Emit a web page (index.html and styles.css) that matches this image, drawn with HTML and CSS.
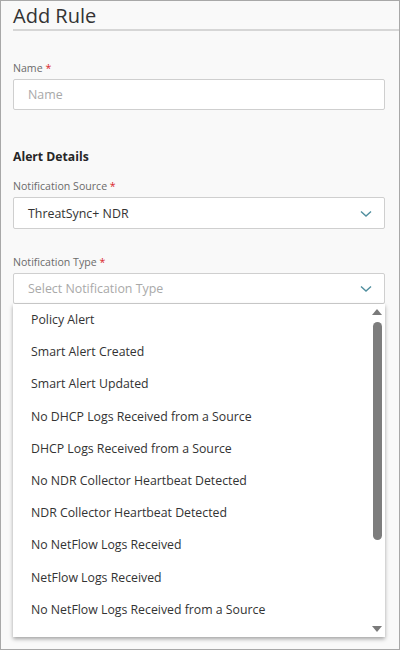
FILE: index.html
```html
<!DOCTYPE html>
<html lang="en">
<head>
<meta charset="utf-8">
<title>Add Rule</title>
<link rel="stylesheet" href="styles.css">
</head>
<body>
<div class="frame">
  <h1 class="title">Add Rule</h1>

  <div class="field field-name">
    <label class="label">Name <span class="req">*</span></label>
    <div class="input"><span class="placeholder">Name</span></div>
  </div>

  <h2 class="section">Alert Details</h2>

  <div class="field field-source">
    <label class="label">Notification Source <span class="req">*</span></label>
    <div class="input select">
      <span class="value">ThreatSync+ NDR</span>
      <svg class="chev" width="12" height="8" viewBox="0 0 12 8"><polyline points="1,1.5 6,6 11,1.5" fill="none" stroke="#4f8e9e" stroke-width="1.4"/></svg>
    </div>
  </div>

  <div class="field field-type">
    <label class="label">Notification Type <span class="req">*</span></label>
    <div class="input select">
      <span class="placeholder">Select Notification Type</span>
      <svg class="chev" width="12" height="8" viewBox="0 0 12 8"><polyline points="1,1.5 6,6 11,1.5" fill="none" stroke="#4f8e9e" stroke-width="1.4"/></svg>
    </div>
    <div class="dropdown">
      <ul class="options">
        <li>Policy Alert</li>
        <li>Smart Alert Created</li>
        <li>Smart Alert Updated</li>
        <li>No DHCP Logs Received from a Source</li>
        <li>DHCP Logs Received from a Source</li>
        <li>No NDR Collector Heartbeat Detected</li>
        <li>NDR Collector Heartbeat Detected</li>
        <li>No NetFlow Logs Received</li>
        <li>NetFlow Logs Received</li>
        <li>No NetFlow Logs Received from a Source</li>
      </ul>
      <div class="scrollbar">
        <span class="arrow up"></span>
        <span class="thumb"></span>
        <span class="track"></span>
        <span class="arrow down"></span>
      </div>
    </div>
  </div>
</div>
</body>
</html>
```

FILE: styles.css
```css
* { box-sizing: border-box; }
html, body {
  margin: 0;
  padding: 0;
}
body {
  width: 400px;
  height: 650px;
  background: #f9f9f9;
  font-family: "Open Sans", "Liberation Sans", sans-serif;
  color: #333;
}
.frame {
  width: 400px;
  height: 650px;
  border: 1px solid #a8a8a8;
  padding: 0 14px 0 12px;
  overflow: hidden;
}
.title {
  margin: 3px -14px 0 0;
  padding: 0 0 1px 0;
  font-size: 20px;
  line-height: 24px;
  font-weight: 400;
  color: #333;
  border-bottom: 2px solid #d6d6d6;
}
.field { display: flex; flex-direction: column; }
.field-name { margin-top: 29px; }
.label {
  font-size: 10.6px;
  line-height: 16px;
  color: #6b6b6b;
  margin-bottom: 3px;
}
.req { color: #d9262b; }
.input {
  height: 31px;
  background: #fff;
  border: 1px solid #cfcfcf;
  border-radius: 2px;
  padding: 0 12px 0 14px;
  display: flex;
  align-items: center;
  font-size: 12.4px;
}
.placeholder { color: #a9a9a9; }
.value { color: #333; }
.select { justify-content: space-between; }
.chev { display: block; margin-top: 1px; }
.section {
  margin: 38px 0 0 0;
  font-size: 12.2px;
  line-height: 18px;
  font-weight: 700;
  color: #262626;
}
.field-source { margin-top: 12px; }
.field-source .input { height: 32px; }
.field-type { margin-top: 25px; }
.dropdown {
  margin-top: 0;
  height: 333px;
  background: #fff;
  box-shadow: 0 2px 4px rgba(0,0,0,0.35);
  display: flex;
}
.options {
  list-style: none;
  margin: 0;
  padding: 0;
  flex: 1;
}
.options li {
  height: 32.2px;
  line-height: 32px;
  padding-left: 18px;
  font-size: 12.3px;
  color: #333;
  white-space: nowrap;
}
.scrollbar {
  width: 14px;
  display: flex;
  flex-direction: column;
  align-items: center;
  padding: 5px 2px 5px 0;
}
.arrow {
  width: 0;
  height: 0;
  border-left: 5px solid transparent;
  border-right: 5px solid transparent;
}
.arrow.up { border-bottom: 6px solid #7a7a7a; }
.arrow.down { border-top: 6px solid #7a7a7a; }
.thumb {
  margin-top: 7px;
  width: 9px;
  height: 218px;
  border-radius: 4.5px;
  background: #7d7d7d;
}
.track { flex: 1; }
```
